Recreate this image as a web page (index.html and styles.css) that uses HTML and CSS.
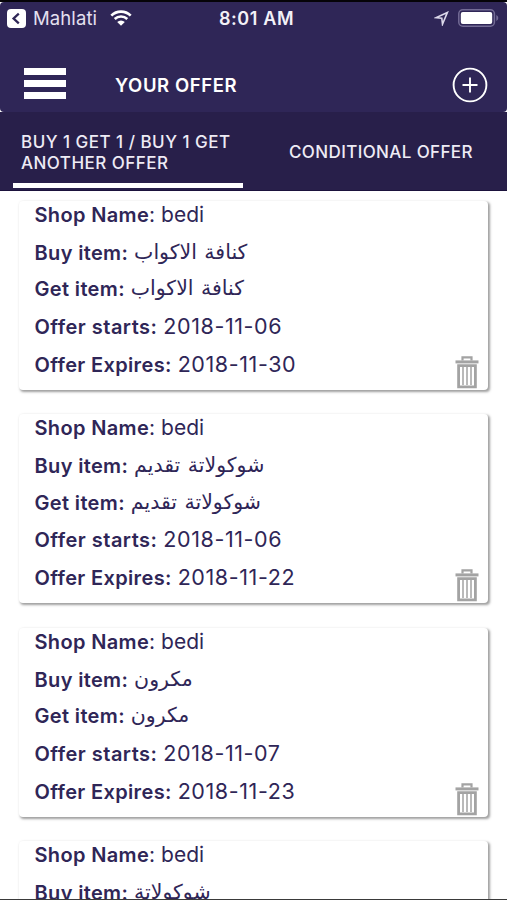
FILE: index.html
```html
<!DOCTYPE html>
<html lang="en">
<head>
    <meta charset="UTF-8">
    <meta name="viewport" content="width=device-width, initial-scale=1.0">
    <title>Your Offer</title>
    <link rel="stylesheet" href="styles.css">
</head>
<body>
    <svg class="sprite">
        <symbol id="trash" viewBox="0 0 24 34">
            <path d="M7.5 5.5V2.3h9v3.2" fill="none" stroke="#a3a3a3" stroke-width="2.2"/>
            <path d="M.5 5.4h23v3H.5z" fill="#a3a3a3"/>
            <path d="M3.6 10.6h16.8v21.3H3.6z" fill="none" stroke="#a3a3a3" stroke-width="2.8"/>
            <path d="M8 12v18M12 12v18M16 12v18" stroke="#a3a3a3" stroke-width="1.5"/>
        </symbol>
    </svg>

    <div class="screen">
        <header class="header">
            <div class="status-bar">
                <div class="status-left">
                    <svg class="back" viewBox="0 0 19 19">
                        <rect width="19" height="19" rx="4" fill="#fff"/>
                        <path d="M11.8 4.7 6.6 9.5l5.2 4.8" fill="none" stroke="#2f2657" stroke-width="2.3"/>
                    </svg>
                    <span class="back-app">Mahlati</span>
                    <svg class="wifi" viewBox="0 0 22 16">
                        <path d="M1.3 5.6a13.8 13.8 0 0 1 19.4 0M4.7 9a9 9 0 0 1 12.6 0" fill="none" stroke="#fff" stroke-width="2.6"/>
                        <path d="M11 15.8 7.2 12a5.4 5.4 0 0 1 7.6 0z" fill="#fff"/>
                    </svg>
                </div>
                <span class="time">8:01 AM</span>
                <div class="status-right">
                    <svg class="location" viewBox="0 0 15 15">
                        <path d="M13.4 1.4 1.8 6.7l6 .5.7 6z" fill="none" stroke="#dcd8ea" stroke-width="1.6"/>
                    </svg>
                    <svg class="battery" viewBox="0 0 41 18">
                        <rect x=".8" y=".8" width="35.6" height="16.4" rx="4" fill="none" stroke="#736b95" stroke-width="1.5"/>
                        <rect x="2.8" y="3" width="31.4" height="12" rx="2" fill="#fff"/>
                        <path d="M38.3 6v6q2-1 2-3t-2-3" fill="#736b95"/>
                    </svg>
                </div>
            </div>
            <div class="nav-bar">
                <div class="menu"><i></i><i></i><i></i></div>
                <h1>YOUR OFFER</h1>
                <svg class="add" viewBox="0 0 36 36">
                    <circle cx="18" cy="18" r="16.4" fill="none" stroke="#fff" stroke-width="1.9"/>
                    <path d="M18 10.5v15M10.5 18h15" stroke="#fff" stroke-width="1.9"/>
                </svg>
            </div>
        </header>

        <nav class="tabs">
            <div class="tab active">BUY 1 GET 1 / BUY 1 GET<br>ANOTHER OFFER</div>
            <div class="tab conditional">CONDITIONAL OFFER</div>
        </nav>

        <main class="offers">
            <article class="card">
                <p><b>Shop Name</b>: <span>bedi</span></p>
                <p><b>Buy item:</b> <span class="ar" lang="ar">كنافة الاكواب</span></p>
                <p><b>Get item:</b> <span class="ar" lang="ar">كنافة الاكواب</span></p>
                <p><b class="starts">Offer starts:</b> <span class="date">2018-11-06</span></p>
                <p><b>Offer Expires:</b> <span class="date">2018-11-30</span></p>
                <svg class="trash"><use href="#trash"/></svg>
            </article>
            <article class="card">
                <p><b>Shop Name</b>: <span>bedi</span></p>
                <p><b>Buy item:</b> <span class="ar" lang="ar">شوكولاتة تقديم</span></p>
                <p><b>Get item:</b> <span class="ar" lang="ar">شوكولاتة تقديم</span></p>
                <p><b class="starts">Offer starts:</b> <span class="date">2018-11-06</span></p>
                <p><b>Offer Expires:</b> <span class="date">2018-11-22</span></p>
                <svg class="trash"><use href="#trash"/></svg>
            </article>
            <article class="card">
                <p><b>Shop Name</b>: <span>bedi</span></p>
                <p><b>Buy item:</b> <span class="ar" lang="ar">مكرون</span></p>
                <p><b>Get item:</b> <span class="ar" lang="ar">مكرون</span></p>
                <p><b class="starts">Offer starts:</b> <span class="date">2018-11-07</span></p>
                <p><b>Offer Expires:</b> <span class="date">2018-11-23</span></p>
                <svg class="trash"><use href="#trash"/></svg>
            </article>
            <article class="card">
                <p><b>Shop Name</b>: <span>bedi</span></p>
                <p><b>Buy item:</b> <span class="ar" lang="ar">شوكولاتة</span></p>
            </article>
        </main>
    </div>
</body>
</html>
```
FILE: styles.css
```css
* {
    box-sizing: border-box;
}
body {
    margin: 0;
    background: #fff;
    color: #2f2657;
    font-family: Inter, "Liberation Sans", sans-serif;
}
.sprite {
    display: none;
}
svg {
    display: block;
    flex: none;
}
.screen {
    height: 900px;
    display: flex;
    flex-direction: column;
    overflow: hidden;
    border-top: 2px solid #050308;
    border-bottom: 1px solid #3a3a3a;
}
.header {
    height: 110px;
    flex: none;
    background: #2f2657;
    border-radius: 4px;
    color: #fff;
}
.status-bar {
    height: 32px;
    display: grid;
    grid-template-columns: 1fr auto 1fr;
    align-items: center;
    padding: 0 8px 0 7px;
}
.status-left {
    display: flex;
    align-items: center;
}
.back {
    width: 19px;
    height: 19px;
}
.back-app {
    margin: 0 13px 0 7px;
    font-size: 18.5px;
    letter-spacing: 0.1px;
    color: #e4e0ef;
}
.wifi {
    width: 22px;
    height: 16px;
}
.time {
    padding-left: 7px;
    font-size: 18px;
    font-weight: 600;
    letter-spacing: 0.6px;
    color: #f3f1f8;
}
.status-right {
    display: flex;
    justify-content: flex-end;
    align-items: center;
    gap: 9px;
}
.location {
    width: 15px;
    height: 15px;
}
.battery {
    width: 41px;
    height: 18px;
}
.nav-bar {
    height: 78px;
    display: flex;
    align-items: center;
    padding: 25px 19px 0 24px;
}
.menu {
    width: 42px;
    display: flex;
    flex-direction: column;
    gap: 4.7px;
    margin-top: -4px;
}
.menu i {
    height: 7px;
    background: #fff;
}
h1 {
    flex: 1;
    margin: -2px 0 0 49px;
    font-size: 18.5px;
    font-weight: 600;
    letter-spacing: 0.6px;
}
.add {
    width: 36px;
    height: 36px;
    margin-top: -2px;
}
.tabs {
    height: 79px;
    flex: none;
    display: flex;
    background: #281f4a;
    border-bottom: 1px solid #1b123c;
    color: #eeebf5;
    font-size: 17px;
    font-weight: 500;
    line-height: 20.5px;
    letter-spacing: 0.48px;
}
.tab {
    white-space: nowrap;
}
.active {
    width: 230px;
    height: 76px;
    margin-left: 13px;
    padding: 20px 0 0 8px;
    border-bottom: 5px solid #fff;
}
.conditional {
    margin-left: 46px;
    padding-top: 30px;
    letter-spacing: 0.38px;
}
.offers {
    padding: 10px 19px 0;
}
.card {
    position: relative;
    height: 189px;
    margin-bottom: 24.4px;
    padding-left: 15.5px;
    border-radius: 4px;
    background: #fff;
    box-shadow: 1.5px 1.5px 2.5px rgba(0, 0, 0, 0.38);
}
.card p {
    height: 37.8px;
    margin: 0;
    font-size: 21px;
    line-height: 28px;
    white-space: nowrap;
}
.card p:nth-child(2) {
    height: 36.4px;
}
.card p:nth-child(3) {
    height: 36.9px;
}
.card b {
    font-size: 20px;
    font-weight: 600;
    letter-spacing: 0.35px;
}
.card .starts {
    letter-spacing: 0.48px;
}
.date {
    font-size: 21.5px;
    letter-spacing: 0.6px;
}
.ar {
    font-family: "DejaVu Sans", sans-serif;
    font-size: 20.5px;
    line-height: 20px;
    word-spacing: 1px;
    vertical-align: 1px;
}
.trash {
    position: absolute;
    right: 9.5px;
    bottom: 1px;
    width: 24px;
    height: 34px;
}
```
